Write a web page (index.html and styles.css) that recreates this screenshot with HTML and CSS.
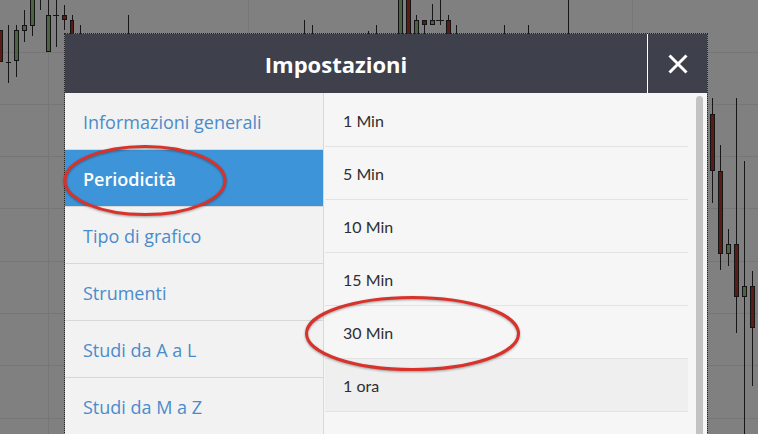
FILE: index.html
```html
<!DOCTYPE html>
<html lang="it">
  <head>
    <meta charset="UTF-8" />
    <meta name="viewport" content="width=device-width, initial-scale=1.0" />
    <title>Impostazioni</title>
    <link rel="stylesheet" href="styles.css">
  </head>
  <body>
    <!-- Grafico sullo sfondo (oscurato) -->
    <svg class="chart" width="758" height="434" viewBox="0 0 758 434">
      <g class="grid">
        <line x1="0" y1="52.5" x2="758" y2="52.5" />
        <line x1="0" y1="104.5" x2="758" y2="104.5" />
        <line x1="0" y1="156.5" x2="758" y2="156.5" />
        <line x1="0" y1="208.5" x2="758" y2="208.5" />
        <line x1="0" y1="261.5" x2="758" y2="261.5" />
        <line x1="0" y1="313.5" x2="758" y2="313.5" />
        <line x1="0" y1="365.5" x2="758" y2="365.5" />
        <line x1="0" y1="418.5" x2="758" y2="418.5" />
        <line x1="48.5" y1="0" x2="48.5" y2="434" />
        <line x1="248.5" y1="0" x2="248.5" y2="434" />
        <line x1="632.5" y1="0" x2="632.5" y2="434" />
      </g>
      <g class="wick">
        <line x1="8.5" y1="25" x2="8.5" y2="83" />
        <line x1="6" y1="62.5" x2="11" y2="62.5" />
        <line x1="16.5" y1="25" x2="16.5" y2="77" />
        <line x1="24.5" y1="10" x2="24.5" y2="42" />
        <line x1="32.5" y1="0" x2="32.5" y2="36" />
        <line x1="40.5" y1="0" x2="40.5" y2="10" />
        <line x1="48.5" y1="0" x2="48.5" y2="15" />
        <line x1="56.5" y1="0" x2="56.5" y2="47" />
        <line x1="53" y1="15.5" x2="59" y2="15.5" />
        <line x1="64.5" y1="5" x2="64.5" y2="30" />
        <line x1="72.5" y1="15" x2="72.5" y2="40" />
        <line x1="80.5" y1="25" x2="80.5" y2="40" />
        <line x1="128.5" y1="15" x2="128.5" y2="40" />
        <line x1="304.5" y1="20" x2="304.5" y2="40" />
        <line x1="312.5" y1="25" x2="312.5" y2="40" />
        <line x1="368.5" y1="31" x2="368.5" y2="40" />
        <line x1="376.5" y1="25" x2="376.5" y2="40" />
        <line x1="416.5" y1="15" x2="416.5" y2="40" />
        <line x1="424.5" y1="20" x2="424.5" y2="40" />
        <line x1="432.5" y1="4" x2="432.5" y2="25" />
        <line x1="440.5" y1="0" x2="440.5" y2="25" />
        <line x1="436" y1="20.5" x2="444" y2="20.5" />
        <line x1="448.5" y1="15" x2="448.5" y2="40" />
        <line x1="456.5" y1="25" x2="456.5" y2="40" />
        <line x1="504.5" y1="25" x2="504.5" y2="40" />
        <line x1="528.5" y1="25" x2="528.5" y2="40" />
        <line x1="568.5" y1="0" x2="568.5" y2="40" />
        <line x1="712.5" y1="98" x2="712.5" y2="203" />
        <line x1="720.5" y1="145" x2="720.5" y2="270" />
        <line x1="728.5" y1="229" x2="728.5" y2="266" />
        <line x1="736.5" y1="98" x2="736.5" y2="333" />
        <line x1="744.5" y1="161" x2="744.5" y2="434" />
        <line x1="752.5" y1="271" x2="752.5" y2="386" />
      </g>
      <g class="up">
        <rect x="14.5" y="30.5" width="4" height="30" />
        <rect x="22.5" y="25.5" width="4" height="5" />
        <rect x="30.5" y="-5" width="4" height="30.5" />
        <rect x="46.5" y="15.5" width="4" height="36" />
        <rect x="398.5" y="-5" width="4" height="45" />
        <rect x="414.5" y="20.5" width="4" height="20" />
        <rect x="430.5" y="20.5" width="4" height="4" />
        <rect x="726.5" y="244.5" width="4" height="9" />
        <rect x="742.5" y="286.5" width="4" height="10" />
      </g>
      <g class="down">
        <rect x="-3" y="30.5" width="5.5" height="31" />
        <rect x="62.5" y="15.5" width="4" height="4" />
        <rect x="70.5" y="20.5" width="3" height="20" />
        <rect x="406.5" y="-5" width="4" height="45" />
        <rect x="422.5" y="20.5" width="4" height="4" />
        <rect x="446.5" y="20.5" width="4" height="20" />
        <rect x="710.5" y="114.5" width="4" height="56" />
        <rect x="718.5" y="171.5" width="4" height="82" />
        <rect x="734.5" y="244.5" width="4" height="52" />
        <rect x="750.5" y="286.5" width="4" height="41" />
      </g>
    </svg>

    <!-- Finestra impostazioni -->
    <div class="modal" role="dialog" aria-labelledby="modal-title">
      <header class="modal-head">
        <h1 id="modal-title" class="modal-title">Impostazioni</h1>
        <button class="modal-close" aria-label="Chiudi">
          <svg width="20" height="20" viewBox="0 0 20 20">
            <path d="M1.5 1.5 L18.5 18.5 M18.5 1.5 L1.5 18.5" />
          </svg>
        </button>
      </header>

      <div class="modal-body">
        <ul class="menu">
          <li class="menu-item">Informazioni generali</li>
          <li class="menu-item active">Periodicità</li>
          <li class="menu-item">Tipo di grafico</li>
          <li class="menu-item">Strumenti</li>
          <li class="menu-item">Studi da A a L</li>
          <li class="menu-item">Studi da M a Z</li>
        </ul>

        <div class="options">
          <ul class="option-list">
            <li class="option">1 Min</li>
            <li class="option">5 Min</li>
            <li class="option">10 Min</li>
            <li class="option">15 Min</li>
            <li class="option">30 Min</li>
            <li class="option hover">1 ora</li>
            <li class="option">1 giorno</li>
          </ul>
          <div class="scrollbar"></div>
        </div>
      </div>
    </div>

    <!-- Cerchi rossi di evidenziazione -->
    <svg class="marks" width="758" height="434" viewBox="0 0 758 434">
      <ellipse cx="145" cy="180.5" rx="80" ry="34" />
      <ellipse cx="412.5" cy="333.5" rx="106" ry="36" />
    </svg>
  </body>
</html>
```

FILE: styles.css
```css
body {
  margin: 0;
  width: 758px;
  height: 434px;
  overflow: hidden;
  position: relative;
  background: #808080;
  font-family: "Open Sans", Arial, sans-serif;
}

ul {
  list-style: none;
  margin: 0;
  padding: 0;
}

.chart {
  position: absolute;
  left: 0;
  top: 0;
}

.grid line {
  stroke: #767676;
  stroke-width: 1;
}

.wick line {
  stroke: #161616;
  stroke-width: 1;
}

.up rect {
  fill: #4c6445;
  stroke: #141414;
  stroke-width: 1;
}

.down rect {
  fill: #5a1c14;
  stroke: #141414;
  stroke-width: 1;
}

/* finestra */
.modal {
  position: absolute;
  left: 65px;
  top: 34px;
  width: 642px;
  height: 430px;
  outline: 1px dotted #262626;
  display: flex;
  flex-direction: column;
}

.modal-head {
  display: flex;
  height: 59px;
  background: #3e404b;
  flex-shrink: 0;
}

.modal-title {
  flex: 1;
  margin: 0;
  padding-right: 40px;
  display: flex;
  align-items: center;
  justify-content: center;
  color: #fff;
  font-size: 22px;
  font-weight: 700;
}

.modal-close {
  width: 60px;
  margin: 0;
  padding: 0;
  border: 0;
  border-left: 1px solid #fff;
  background: transparent;
  display: flex;
  align-items: center;
  justify-content: center;
  cursor: pointer;
}

.modal-close path {
  stroke: #fff;
  stroke-width: 3;
  fill: none;
}

.modal-body {
  flex: 1;
  display: flex;
  overflow: hidden;
}

/* menu laterale */
.menu {
  width: 258px;
  background: #f2f2f2;
  border-right: 1px solid #d9d9d9;
}

.menu-item {
  height: 56px;
  padding: 2px 0 0 18px;
  box-sizing: border-box;
  height: 57px;
  display: flex;
  align-items: center;
  border-bottom: 1px solid #d8d8d8;
  color: #4a8ccb;
  font-size: 18px;
}

.menu-item.active {
  background: #3d94d8;
  color: #fff;
  font-weight: 600;
}

/* elenco periodi */
.options {
  flex: 1;
  display: flex;
  background: #f6f6f6;
}

.option-list {
  flex: 1;
  margin-left: 1px;
  padding-top: 1px;
}

.option {
  height: 53px;
  box-sizing: border-box;
  padding: 1px 0 0 18px;
  display: flex;
  align-items: center;
  border-bottom: 1px solid #e3e3e3;
  color: #2e2e2e;
  font-family: Lato, "Open Sans", sans-serif;
  font-size: 16px;
}

.option.hover {
  background: #efefef;
}

.scrollbar {
  width: 7px;
  margin: 3px 4px 0 8px;
  border-radius: 4px 4px 0 0;
  background: #c3c3c3;
}

/* evidenziazioni */
.marks {
  position: absolute;
  left: 0;
  top: 0;
  pointer-events: none;
  filter: drop-shadow(0 1px 1px rgba(0, 0, 0, 0.35));
}

.marks ellipse {
  fill: none;
  stroke: #d8322a;
  stroke-width: 3;
}
```
